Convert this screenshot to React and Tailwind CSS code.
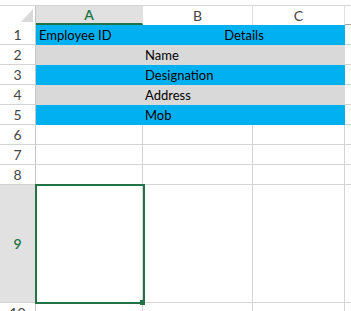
import React from "react";

const G = "border-[#d4d4d4]";

function RowHead({ n, sel, h = "h-[20px]" }) {
  return (
    <div
      className={`${h} border-r border-b border-r-[#c6c6c6] border-b-[#d4d4d4] flex items-center justify-center text-[14px] leading-[20px] pt-[1px] ${
        sel ? "bg-[#e1e1e1] text-[#217346] font-semibold" : "bg-white text-[#444444]"
      }`}
    >
      {n}
    </div>
  );
}

function Empty({ h = "h-[20px]" }) {
  return <div className={`${h} border-r border-b ${G}`} />;
}

function Extra({ h = "h-[20px]" }) {
  return <div className={`${h} border-b ${G}`} />;
}

export default function App() {
  const filled = [
    { n: 2, t: "Name", bg: "bg-[#d9d9d9]" },
    { n: 3, t: "Designation", bg: "bg-[#00b0f0]" },
    { n: 4, t: "Address", bg: "bg-[#d9d9d9]" },
    { n: 5, t: "Mob", bg: "bg-[#00b0f0]" },
  ];
  return (
    <div
      className="relative w-[351px] h-[311px] overflow-hidden bg-white pt-[5px] text-black"
      style={{ fontFamily: "Lato, 'Liberation Sans', sans-serif" }}
    >
      <div className="grid grid-cols-[36px_107px_110px_92px_1fr]">
        {/* header row */}
        <div className="relative h-[20px] border-t border-r border-t-[#d4d4d4] border-r-[#c6c6c6] bg-white">
          <div className="absolute right-[2px] bottom-[3px] w-0 h-0 border-l-[12px] border-l-transparent border-b-[13px] border-b-[#dadada]" />
        </div>
        <div className="h-[20px] border-t border-t-[#d4d4d4] border-r border-r-[#e1e1e1] border-b-2 border-b-[#217346] bg-[#e1e1e1] flex items-center justify-center text-[14px] font-semibold text-[#217346] leading-[18px]">
          A
        </div>
        <div className="h-[20px] border-t border-t-[#d4d4d4] border-r border-r-[#e1e1e1] bg-white flex items-center justify-center text-[14px] text-[#444444] leading-[18px]">
          B
        </div>
        <div className="h-[20px] border-t border-t-[#d4d4d4] border-r border-r-[#e1e1e1] bg-white flex items-center justify-center text-[14px] text-[#444444] leading-[18px]">
          C
        </div>
        <div className="h-[20px] border-t border-t-[#d4d4d4] border-b border-b-[#a6a6a6] bg-white" />

        {/* row 1 */}
        <RowHead n={1} />
        <div className="h-[20px] bg-[#00b0f0] text-[13px] leading-[21px] pl-[3px] whitespace-nowrap">
          Employee ID
        </div>
        <div className="col-span-2 h-[20px] bg-[#00b0f0] text-[13px] leading-[21px] text-center">
          Details
        </div>
        <Extra />

        {filled.map((r) => (
          <React.Fragment key={r.n}>
            <RowHead n={r.n} />
            <div className={`h-[20px] ${r.bg}`} />
            <div className={`col-span-2 h-[20px] ${r.bg} text-[13px] leading-[21px] pl-[2px]`}>
              {r.t}
            </div>
            <Extra />
          </React.Fragment>
        ))}

        {[6, 7, 8].map((n) => (
          <React.Fragment key={n}>
            <RowHead n={n} />
            <Empty />
            <Empty />
            <Empty />
            <Extra />
          </React.Fragment>
        ))}

        <RowHead n={9} sel h="h-[118px]" />
        <Empty h="h-[118px]" />
        <Empty h="h-[118px]" />
        <Empty h="h-[118px]" />
        <Extra h="h-[118px]" />

        <RowHead n={10} />
        <Empty />
        <Empty />
        <Empty />
        <Extra />
      </div>

      {/* selection box */}
      <div className="absolute left-[35px] top-[184px] w-[110px] h-[120px] border-2 border-[#217346]" />
      <div className="absolute left-[140px] top-[300px] w-[5px] h-[5px] bg-[#217346]" />
    </div>
  );
}
